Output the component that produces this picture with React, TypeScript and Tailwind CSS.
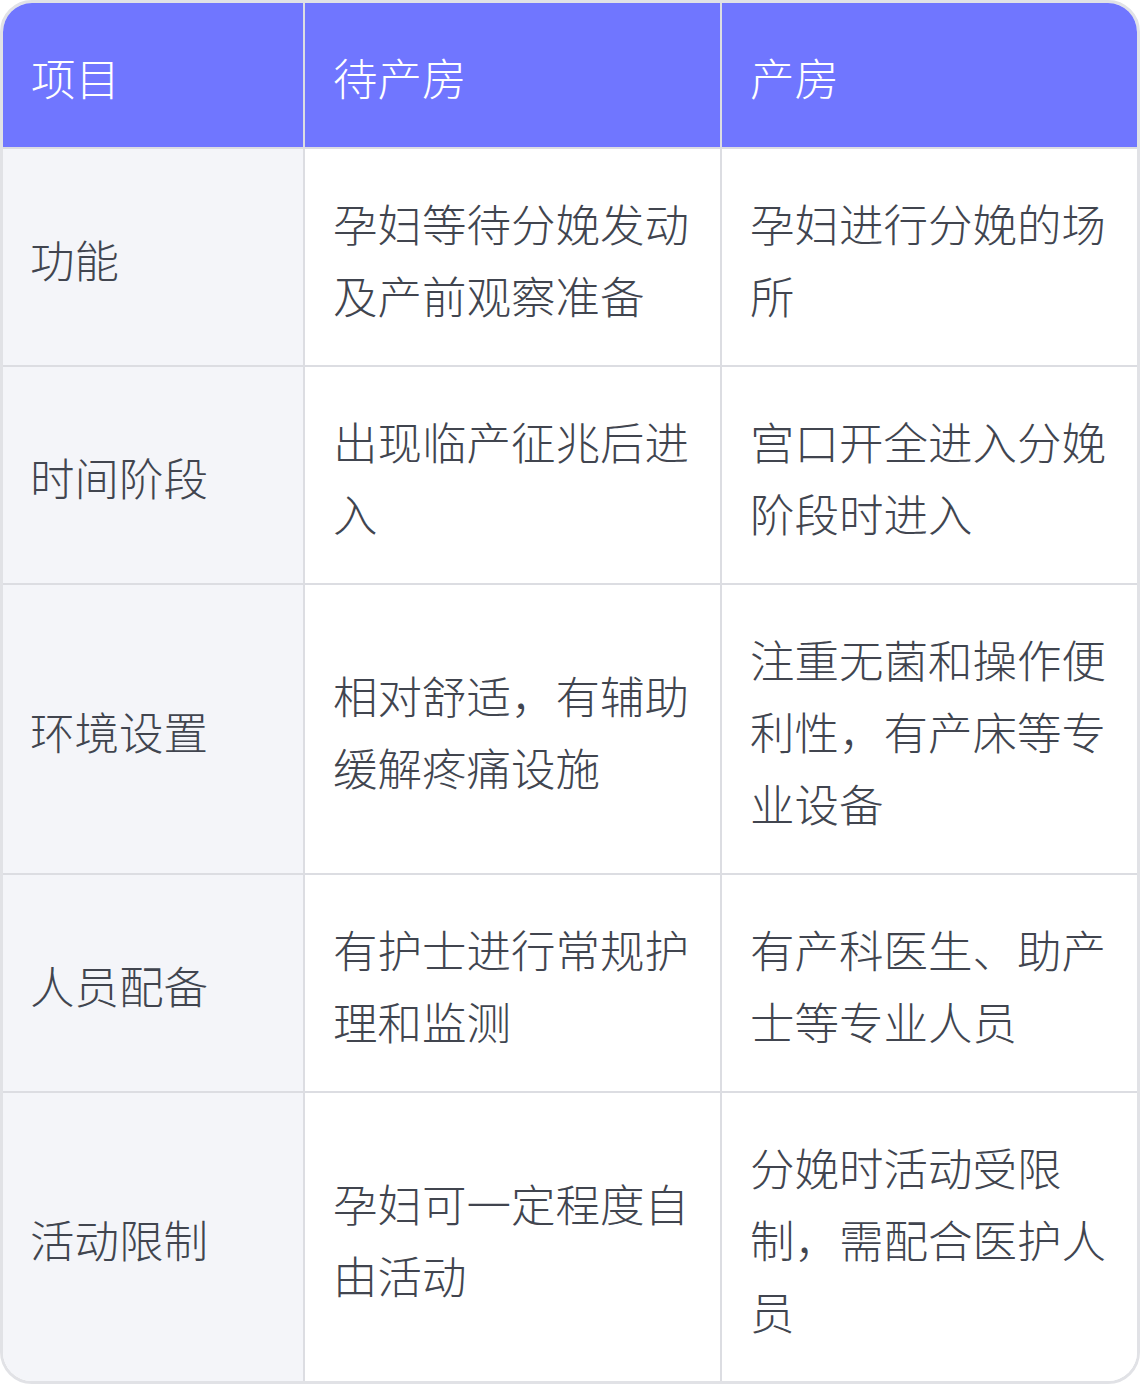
const rows: [string, string, string][] = [
  ['功能', '孕妇等待分娩发动及产前观察准备', '孕妇进行分娩的场所'],
  ['时间阶段', '出现临产征兆后进入', '宫口开全进入分娩阶段时进入'],
  ['环境设置', '相对舒适，有辅助缓解疼痛设施', '注重无菌和操作便利性，有产床等专业设备'],
  ['人员配备', '有护士进行常规护理和监测', '有产科医生、助产士等专业人员'],
  ['活动限制', '孕妇可一定程度自由活动', '分娩时活动受限制，需配合医护人员'],
];

export default function App() {
  return (
    <div className="w-[1140px] bg-white" style={{ fontFamily: '"Noto Sans CJK SC", "Noto Sans", sans-serif' }}>
      <div className="overflow-hidden rounded-[32px] border-[3px] border-[#e1e2e6]">
        <table className="w-full table-fixed border-separate border-spacing-0 text-[44.5px] leading-[72px] font-light">
          <colgroup>
            <col className="w-[302px]" />
            <col className="w-[417px]" />
            <col className="w-[415px]" />
          </colgroup>
          <thead>
            <tr className="bg-[#7076ff] text-white">
              <th className="border-r-2 border-b-2 border-[#dcdde2] pl-[28px] pr-[26px] pt-[38px] pb-[34px] text-left font-light">项目</th>
              <th className="border-r-2 border-b-2 border-[#dcdde2] pl-[28px] pr-[26px] pt-[38px] pb-[34px] text-left font-light">待产房</th>
              <th className="border-b-2 border-[#dcdde2] pl-[28px] pr-[26px] pt-[38px] pb-[34px] text-left font-light">产房</th>
            </tr>
          </thead>
          <tbody className="text-[#41454f]">
            {rows.map((r, i) => {
              const last = i === rows.length - 1;
              const bb = last ? '' : 'border-b-2';
              return (
                <tr key={r[0]}>
                  <td className={`${bb} border-r-2 border-[#dcdde2] bg-[#f4f5f9] pl-[27px] pr-[26px] pt-[38px] pb-[34px] align-middle`}>{r[0]}</td>
                  <td className={`${bb} border-r-2 border-[#dcdde2] bg-white pl-[28px] pr-[26px] pt-[38px] pb-[34px] align-middle`}>{r[1]}</td>
                  <td className={`${bb} border-[#dcdde2] bg-white pl-[28px] pr-[26px] pt-[38px] pb-[34px] align-middle`}>{r[2]}</td>
                </tr>
              );
            })}
          </tbody>
        </table>
      </div>
    </div>
  );
}
